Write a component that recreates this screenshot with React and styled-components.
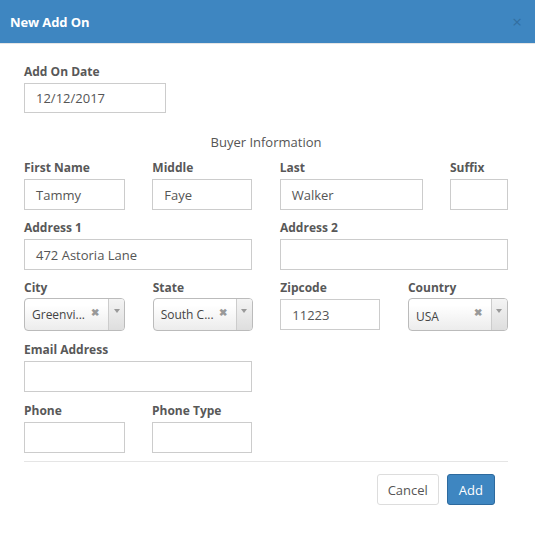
import React from 'react'
import styled, { createGlobalStyle } from 'styled-components'

const GlobalStyle = createGlobalStyle`
  html, body {
    margin: 0;
    padding: 0;
    background: #ffffff;
  }
  body {
    font-family: 'Open Sans', 'Liberation Sans', sans-serif;
    color: #555555;
  }
`

const Modal = styled.div`
  width: 535px;
  height: 535px;
  background: #ffffff;
  display: flex;
  flex-direction: column;
`

const Header = styled.div`
  height: 43px;
  background: #3e86c1;
  border-bottom: 1px solid #e5e5e5;
  display: flex;
  align-items: center;
  justify-content: space-between;
  padding: 0 13px 0 10px;
`

const Title = styled.h4`
  margin: 0;
  font-size: 13px;
  font-weight: 700;
  color: #ffffff;
  letter-spacing: -0.1px;
`

const Close = styled.span`
  font-size: 17px;
  line-height: 1;
  color: #2f6796;
  opacity: 0.75;
  cursor: pointer;
`

const Body = styled.div`
  padding: 19px 27px 0 24px;
  display: flex;
  flex-direction: column;
`

const SectionTitle = styled.div`
  text-align: center;
  font-size: 13px;
  line-height: 18px;
  margin: 20px 0 8px;
  color: #555555;
`

const Row = styled.div`
  display: flex;
  justify-content: ${(p) => (p.packed ? 'flex-start' : 'space-between')};
  gap: ${(p) => (p.packed ? '27px' : '0')};
  margin-bottom: ${(p) => p.mb ?? 9}px;
`

const Field = styled.div`
  width: ${(p) => p.w}px;
  display: flex;
  flex-direction: column;
`

const Label = styled.label`
  font-size: 12px;
  font-weight: 700;
  line-height: 17px;
  margin-bottom: 3px;
  color: #585858;
  white-space: nowrap;
`

const Input = styled.div`
  box-sizing: border-box;
  height: ${(p) => p.h || 31}px;
  border: 1px solid #cccccc;
  padding: 0 11px;
  display: flex;
  align-items: center;
  font-size: 13px;
  color: #555555;
`

const Select = styled.div`
  box-sizing: border-box;
  height: 33px;
  margin-top: -1px;
  border: 1px solid #bbbbbb;
  border-radius: 4px;
  background: linear-gradient(#ffffff 20%, #ececec);
  display: flex;
  align-items: stretch;
  font-size: 12px;
  color: #444444;
  overflow: hidden;
`

const SelectText = styled.span`
  flex: 1;
  padding-left: 7px;
  display: flex;
  align-items: center;
  padding-top: ${(p) => (p.low ? 4 : 0)}px;
  white-space: nowrap;
`

const Clear = styled.span`
  width: 14px;
  font-size: 10px;
  font-weight: 700;
  color: #999999;
  padding-top: 6px;
  margin-right: 3px;
`

const Arrow = styled.span`
  width: 16px;
  border-left: 1px solid #cccccc;
  background: linear-gradient(#f4f4f4, #dedede);
  display: flex;
  justify-content: center;
  padding-top: 10px;
  box-sizing: border-box;
  &::after {
    content: '';
    width: 0;
    height: 0;
    border-left: 3px solid transparent;
    border-right: 3px solid transparent;
    border-top: 4px solid #999999;
  }
`

const Divider = styled.hr`
  border: 0;
  border-top: 1px solid #e5e5e5;
  margin: 0 0 12px;
`

const Footer = styled.div`
  display: flex;
  justify-content: flex-end;
  gap: 8px;
  padding-right: 13px;
`

const Button = styled.button`
  box-sizing: border-box;
  height: 31px;
  padding: 0 ${(p) => (p.primary ? 11 : 10)}px;
  font-family: 'Open Sans', 'Liberation Sans', sans-serif;
  font-size: 13px;
  border-radius: 3px;
  border: 1px solid ${(p) => (p.primary ? '#2d6a9e' : '#dddddd')};
  background: ${(p) => (p.primary ? '#3e86c1' : '#ffffff')};
  color: ${(p) => (p.primary ? '#ffffff' : '#555555')};
  cursor: pointer;
`

const TextField = ({ label, w, value, h }) => (
  <Field w={w}>
    <Label>{label}</Label>
    <Input h={h}>{value}</Input>
  </Field>
)

const SelectField = ({ label, w, value, low }) => (
  <Field w={w}>
    <Label>{label}</Label>
    <Select>
      <SelectText low={low}>{value}</SelectText>
      <Clear>✖</Clear>
      <Arrow />
    </Select>
  </Field>
)

export default function App() {
  return (
    <>
      <GlobalStyle />
      <Modal>
        <Header>
          <Title>New Add On</Title>
          <Close>×</Close>
        </Header>
        <Body>
          <Row mb={0}>
            <TextField label="Add On Date" w={142} h={30} value="12/12/2017" />
          </Row>
          <SectionTitle>Buyer Information</SectionTitle>
          <Row>
            <TextField label="First Name" w={101} value="Tammy" />
            <TextField label="Middle" w={100} value="Faye" />
            <TextField label="Last" w={143} value="Walker" />
            <TextField label="Suffix" w={58} value="" />
          </Row>
          <Row>
            <TextField label="Address 1" w={228} value="472 Astoria Lane" />
            <TextField label="Address 2" w={228} value="" />
          </Row>
          <Row mb={10}>
            <SelectField label="City" w={101} value="Greenvi..." />
            <SelectField label="State" w={100} value="South C..." />
            <TextField label="Zipcode" w={100} value="11223" />
            <SelectField label="Country" w={100} value="USA" low />
          </Row>
          <Row mb={10} packed>
            <TextField label="Email Address" w={228} value="" />
          </Row>
          <Row mb={8} packed>
            <TextField label="Phone" w={101} value="" />
            <TextField label="Phone Type" w={100} value="" />
          </Row>
          <Divider />
          <Footer>
            <Button>Cancel</Button>
            <Button primary>Add</Button>
          </Footer>
        </Body>
      </Modal>
    </>
  )
}
